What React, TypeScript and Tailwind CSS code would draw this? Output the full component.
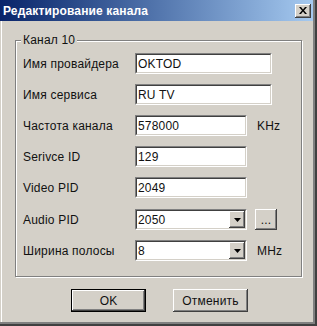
const raised =
  'shadow-[inset_-1px_-1px_0_#404040,inset_1px_1px_0_#ffffff,inset_-2px_-2px_0_#808080,inset_2px_2px_0_#d4d0c8] bg-[#d4d0c8]';

function Field({ value, width }: { value: string; width: string }) {
  return (
    <div className={`${width} h-[21px] border border-t-[#808080] border-l-[#808080] border-b-white border-r-white`}>
      <div className="h-full border border-t-[#404040] border-l-[#404040] border-b-[#d4d0c8] border-r-[#d4d0c8] bg-white flex items-center pl-px">
        {value}
      </div>
    </div>
  );
}

function Combo({ value }: { value: string }) {
  return (
    <div className="w-[112px] h-[21px] border border-t-[#808080] border-l-[#808080] border-b-white border-r-white">
      <div className="h-full border border-t-[#404040] border-l-[#404040] border-b-[#d4d0c8] border-r-[#d4d0c8] bg-white flex items-center">
        <span className="flex-1 pl-px">{value}</span>
        <div className={`w-[16px] h-full flex items-center justify-center ${raised}`}>
          <svg width="7" height="4" viewBox="0 0 7 4">
            <path d="M0 0h7L3.5 4z" fill="#000" />
          </svg>
        </div>
      </div>
    </div>
  );
}

function Row({ label, children }: { label: string; children: React.ReactNode }) {
  return (
    <div className="flex items-center h-[21px]">
      <span className="w-[112px] whitespace-nowrap">{label}</span>
      {children}
    </div>
  );
}

export default function App() {
  return (
    <div className="w-[317px] h-[326px] bg-[#404040] pr-[2px] pb-[2px] font-['Liberation_Sans',Arial,sans-serif] text-[12px] tracking-[0.2px] text-[#111] leading-[14px]">
      <div className="h-full bg-[#808080] pr-[2px] pb-[2px]">
        <div className="h-full bg-[#d4d0c8] flex flex-col">
          {/* title bar */}
          <div className="h-[21px] flex items-center bg-gradient-to-r from-[#0a246a] to-[#a6caf0] pl-[3px] pr-[2px]">
            <span className="flex-1 text-white font-bold tracking-[0.15px] whitespace-nowrap">Редактирование канала</span>
            <div className={`w-[16px] h-[14px] flex items-center justify-center ${raised}`}>
              <svg width="8" height="7" viewBox="0 0 8 7">
                <path d="M0 0h2l2 2.5L6 0h2L5 3.5 8 7H6L4 4.5 2 7H0l3-3.5z" fill="#000" />
              </svg>
            </div>
          </div>

          <div className="flex-1 ml-px border-l border-white flex flex-col">
            {/* group box */}
            <div className="relative ml-[13px] mt-[19px] w-[287px] h-[237px] border border-[#808080] shadow-[inset_1px_1px_0_#ffffff,1px_1px_0_#ffffff] pl-[7px] pt-[12px]">
              <span className="absolute -top-[8px] left-[5px] px-[2px] bg-[#d4d0c8]">Канал 10</span>
              <div className="flex flex-col gap-[10px]">
                <Row label="Имя провайдера">
                  <Field value="OKTOD" width="w-[137px]" />
                </Row>
                <Row label="Имя сервиса">
                  <Field value="RU TV" width="w-[137px]" />
                </Row>
                <Row label="Частота канала">
                  <Field value="578000" width="w-[112px]" />
                  <span className="ml-[10px]">KHz</span>
                </Row>
                <Row label="Serivce ID">
                  <Field value="129" width="w-[112px]" />
                </Row>
                <Row label="Video PID">
                  <Field value="2049" width="w-[112px]" />
                </Row>
                <div className="mt-px">
                  <Row label="Audio PID">
                    <Combo value="2050" />
                    <div className={`ml-[8px] w-[22px] h-[21px] flex items-center justify-center ${raised}`}>...</div>
                  </Row>
                </div>
                <Row label="Ширина полосы">
                  <Combo value="8" />
                  <span className="ml-[10px]">MHz</span>
                </Row>
              </div>
            </div>

            {/* buttons */}
            <div className="flex ml-[69px] mt-[12px] gap-[27px]">
              <div className="w-[75px] h-[23px] border border-black">
                <div className={`h-full flex items-center justify-center ${raised}`}>OK</div>
              </div>
              <div className={`w-[75px] h-[23px] flex items-center justify-center ${raised}`}>Отменить</div>
            </div>
          </div>
        </div>
      </div>
    </div>
  );
}
